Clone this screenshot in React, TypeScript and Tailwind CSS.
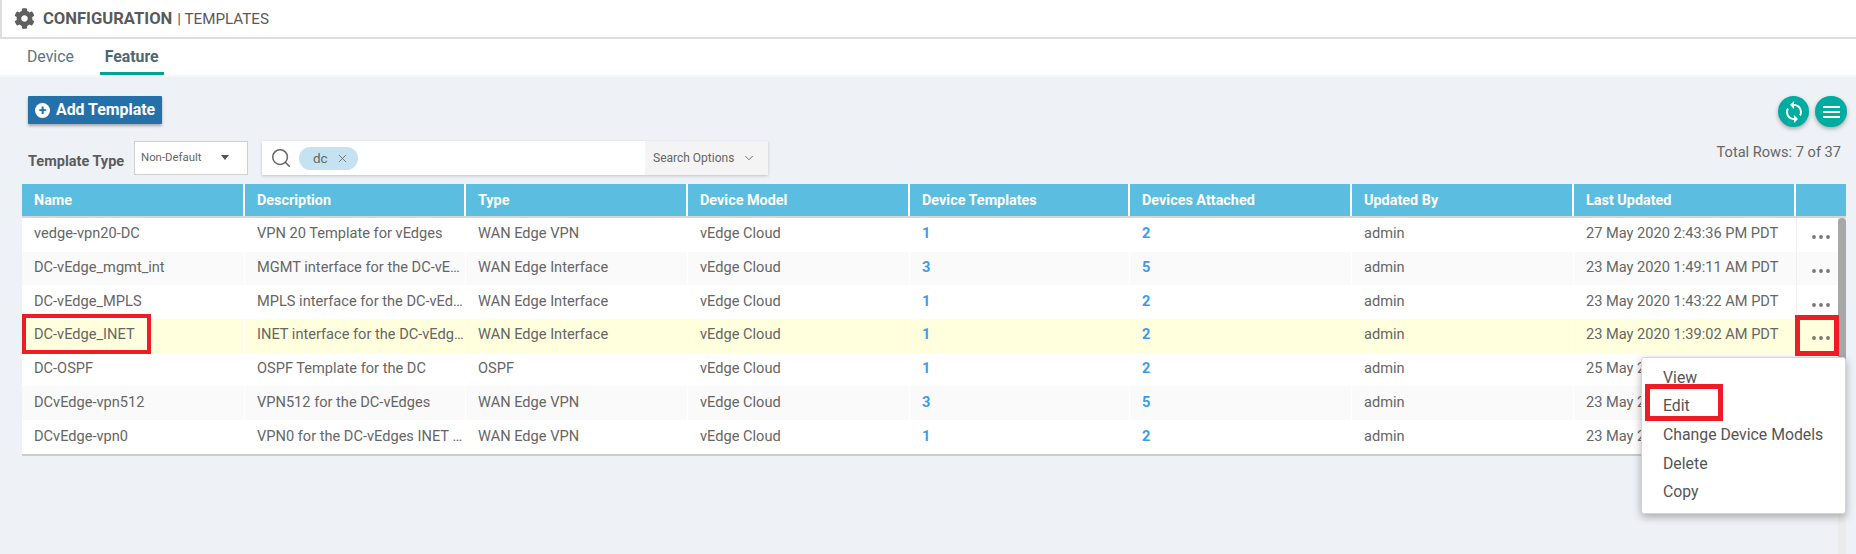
import { ChevronDown, Search, X } from "lucide-react";
import { FaCog } from "react-icons/fa";
import { MdSync } from "react-icons/md";

const columns = ["Name", "Description", "Type", "Device Model", "Device Templates", "Devices Attached", "Updated By", "Last Updated", ""];

const rows = [
  { name: "vedge-vpn20-DC", desc: "VPN 20 Template for vEdges", type: "WAN Edge VPN", tpl: 1, dev: 2, updated: "27 May 2020 2:43:36 PM PDT", bg: "bg-white" },
  { name: "DC-vEdge_mgmt_int", desc: "MGMT interface for the DC-vEdges", type: "WAN Edge Interface", tpl: 3, dev: 5, updated: "23 May 2020 1:49:11 AM PDT", bg: "bg-[#fafafa]" },
  { name: "DC-vEdge_MPLS", desc: "MPLS interface for the DC-vEdges", type: "WAN Edge Interface", tpl: 1, dev: 2, updated: "23 May 2020 1:43:22 AM PDT", bg: "bg-white" },
  { name: "DC-vEdge_INET", desc: "INET interface for the DC-vEdges", type: "WAN Edge Interface", tpl: 1, dev: 2, updated: "23 May 2020 1:39:02 AM PDT", bg: "bg-[#ffffdd]" },
  { name: "DC-OSPF", desc: "OSPF Template for the DC", type: "OSPF", tpl: 1, dev: 2, updated: "25 May 2020 1:33:10 AM PDT", bg: "bg-white" },
  { name: "DCvEdge-vpn512", desc: "VPN512 for the DC-vEdges", type: "WAN Edge VPN", tpl: 3, dev: 5, updated: "23 May 2020 1:21:47 AM PDT", bg: "bg-[#fafafa]" },
  { name: "DCvEdge-vpn0", desc: "VPN0 for the DC-vEdges INET and MPLS", type: "WAN Edge VPN", tpl: 1, dev: 2, updated: "23 May 2020 1:18:05 AM PDT", bg: "bg-white" },
];

const gridCols = "grid grid-cols-[223px_221px_222px_222px_220px_222px_222px_222px_50px]";
const menuItems = [
  { label: "View", h: "h-[29px]" },
  { label: "Edit", h: "h-[28px]" },
  { label: "Change Device Models", h: "h-[30px]" },
  { label: "Delete", h: "h-[28px]" },
  { label: "Copy", h: "h-[27px]" },
];

function Dots() {
  return (
    <svg width="20" height="6" viewBox="0 0 20 6" className="fill-[#777]">
      <circle cx="3" cy="3" r="1.9" />
      <circle cx="10" cy="3" r="1.9" />
      <circle cx="17" cy="3" r="1.9" />
    </svg>
  );
}

export default function App() {
  return (
    <div className="relative h-screen overflow-hidden bg-[#eef1f6] font-['Roboto',sans-serif] text-[14.6px] text-[#666]">
      <header className="flex h-[39px] items-center border-b-2 border-l-2 border-[#dedede] bg-white pl-3">
        <FaCog className="text-[21px] text-[#5f5f5f]" />
        <span className="ml-2 mt-px text-[16.6px] font-bold text-[#5a5a5a]">CONFIGURATION</span>
        <span className="ml-[5px] mt-px text-[15.2px] text-[#5a5a5a]">| TEMPLATES</span>
      </header>

      <nav className="flex h-[38px] border-b-2 border-[#f5f6f8] bg-white pl-[22px] text-[15.8px] text-[#5c7480]">
        <div className="flex items-center px-[5px]">Device</div>
        <div className="ml-[21px] flex items-center border-b-[3px] border-[#00a396] px-[5px] pt-[3px] font-bold text-[#4f6772]">Feature</div>
      </nav>

      <main className="relative pl-[22px] pr-[9px]">
        <div className="flex items-start justify-between pl-[6px] pt-[19px]">
          <button className="flex h-[28px] w-[134px] items-center gap-[6px] rounded-[1px] bg-[#2471a9] pl-[7px] text-[15.9px] font-bold text-white shadow-[0_2px_3px_rgba(0,0,0,0.3)]">
            <span className="flex h-[15px] w-[15px] items-center justify-center rounded-full bg-white text-[14px] font-bold leading-none text-[#2471a9]">+</span>
            Add Template
          </button>
          <div className="flex gap-[6px]">
            <button className="flex h-[31px] w-[31px] items-center justify-center rounded-full bg-[#00ab9f] text-white shadow-[0_2px_4px_rgba(0,0,0,0.3)]">
              <MdSync className="text-[24px]" />
            </button>
            <button className="flex h-[31px] w-[32px] flex-col items-center justify-center gap-[3px] rounded-full bg-[#00ab9f] shadow-[0_2px_4px_rgba(0,0,0,0.3)]">
              <span className="h-[2px] w-[17px] bg-white" />
              <span className="h-[2px] w-[17px] bg-white" />
              <span className="h-[2px] w-[17px] bg-white" />
            </button>
          </div>
        </div>

        <div className="mt-[14px] flex h-[34px] items-start pl-[6px]">
          <span className="mt-[10px] w-[106px] text-[14.5px] font-bold text-[#5c5c5c]">Template Type</span>
          <div className="flex h-[34px] w-[114px] items-center justify-between border border-[#cfcfcf] bg-white pb-[1px] pl-[6px] pr-[18px] text-[11.4px]">
            Non-Default
            <span className="h-0 w-0 border-x-[4px] border-t-[5px] border-x-transparent border-t-[#555]" />
          </div>
          <div className="ml-[14px] flex h-[34px] w-[506px] items-center bg-white shadow-[0_1px_3px_rgba(0,0,0,0.2)]">
            <Search className="ml-[8px] h-[22px] w-[22px] text-[#666]" strokeWidth={1.7} />
            <span className="ml-[7px] flex h-[23px] w-[59px] items-center rounded-full bg-[#c5e2f3] pl-[14px] text-[13.5px]">
              dc
              <X className="ml-[8px] h-[13px] w-[13px]" strokeWidth={1.5} />
            </span>
            <div className="ml-auto flex h-full w-[123px] items-center bg-[#f4f4f4] pl-[8px] text-[12px]">
              Search Options
              <ChevronDown className="ml-[8px] h-[14px] w-[14px]" strokeWidth={1.5} />
            </div>
          </div>
          <span className="ml-auto mr-[6px] mt-[1px]">Total Rows: 7 of 37</span>
        </div>

        <div className="mt-[9px] w-[1824px] border-b-2 border-[#c9cbce]">
          <div className={`${gridCols} h-[34px] border-b-2 border-[#d4d6d9] bg-[#5bbde0] text-[14.4px] font-bold text-white`}>
            {columns.map((c, i) => (
              <div key={i} className="flex items-center border-r-2 border-white pl-3 pt-px last:border-r-0">{c}</div>
            ))}
          </div>
          {rows.map((r) => (
            <div key={r.name} className={`${gridCols} h-[33.7px] ${r.bg}`}>
              <div className="flex items-center border-r border-white pb-px pl-3">{r.name}</div>
              <div className="flex min-w-0 items-center border-r border-white pb-px pl-3">
                <span className="truncate">{r.desc}</span>
              </div>
              <div className="flex items-center border-r border-white pb-px pl-3">{r.type}</div>
              <div className="flex items-center border-r border-white pb-px pl-3">vEdge Cloud</div>
              <div className="flex items-center border-r border-white pb-px pl-3 font-bold text-[#3d9bec]">{r.tpl}</div>
              <div className="flex items-center border-r border-white pb-px pl-3 font-bold text-[#3d9bec]">{r.dev}</div>
              <div className="flex items-center border-r border-white pb-px pl-3">admin</div>
              <div className="flex items-center pb-px pl-3">{r.updated}</div>
              <div className="flex items-center border-l border-[#eeeeee] pl-[14px] pt-[5px]"><Dots /></div>
            </div>
          ))}
        </div>
      </main>

      {/* scrollbar sits over the last column */}
      <div className="absolute bottom-0 left-[1838px] top-[218px] w-[8px] bg-[#ebebeb]">
        <div className="h-[252px] rounded-t-[4px] bg-[#a8a8a8]" />
      </div>

      {/* row action menu */}
      <div className="absolute left-[1641px] top-[357px] w-[205px] rounded-[3px] border border-[#d5d5d5] bg-white pl-[21px] pt-[5px] text-[15.8px] text-[#555] shadow-[0_3px_8px_rgba(0,0,0,0.3)]">
        {menuItems.map((m) => (
          <div key={m.label} className={`flex items-center ${m.h}`}>{m.label}</div>
        ))}
        <div className="h-[8px]" />
      </div>

      {/* red callouts drawn on top of the screenshot */}
      <div className="absolute left-[22px] top-[314px] h-[40px] w-[129px] border-[4px] border-[#ee1c25]" />
      <div className="absolute left-[1795px] top-[315px] h-[41px] w-[44px] border-[5px] border-[#ee1c25]" />
      <div className="absolute left-[1645px] top-[384px] h-[37px] w-[78px] border-[5px] border-[#ee1c25]" />
    </div>
  );
}
